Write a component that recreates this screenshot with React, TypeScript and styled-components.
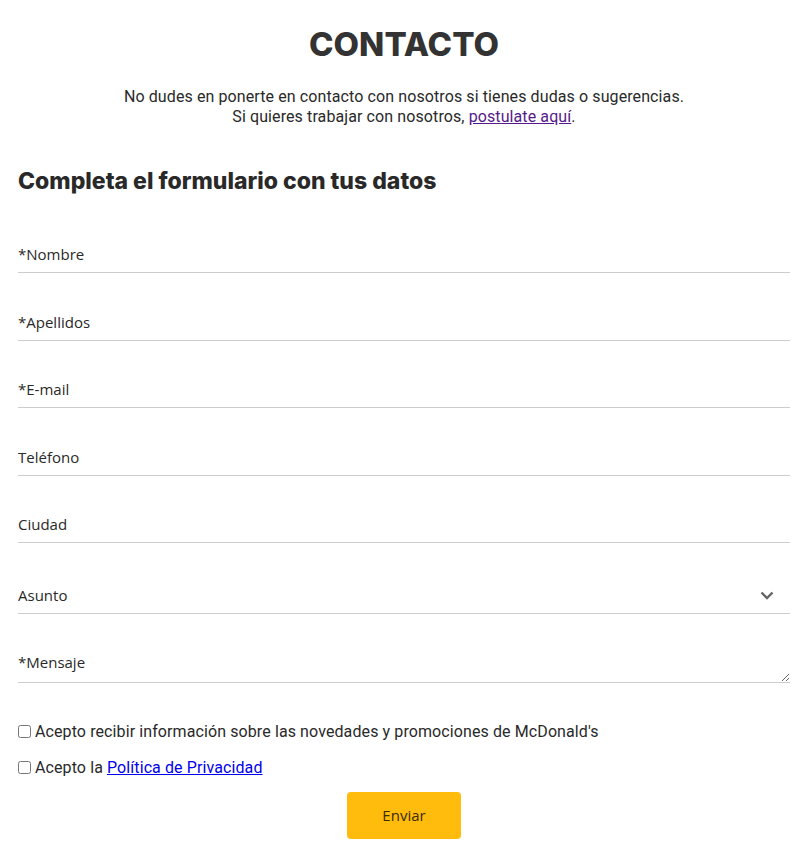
import styled, { createGlobalStyle } from 'styled-components';

const GlobalStyle = createGlobalStyle`
  body {
    margin: 0;
    background: #ffffff;
    color: #292929;
    font-family: Roboto, 'Liberation Sans', sans-serif;
  }
  * {
    box-sizing: border-box;
  }
`;

const fields = [
  { name: 'nombre', label: '*Nombre' },
  { name: 'apellidos', label: '*Apellidos' },
  { name: 'email', label: '*E-mail' },
  { name: 'telefono', label: 'Teléfono' },
  { name: 'ciudad', label: 'Ciudad' },
];

const App = () => {
  return (
    <>
      <GlobalStyle />
      <Page>
        <Title>CONTACTO</Title>
        <Intro>
          No dudes en ponerte en contacto con nosotros si tienes dudas o sugerencias.
          <br />
          Si quieres trabajar con nosotros, <VisitedLink href="#">postulate aquí</VisitedLink>.
        </Intro>
        <FormTitle>Completa el formulario con tus datos</FormTitle>
        <Form onSubmit={(e) => e.preventDefault()}>
          {fields.map((f) => (
            <TextInput key={f.name} name={f.name} placeholder={f.label} />
          ))}
          <SelectWrap>
            <Select defaultValue="">
              <option value="" disabled>
                Asunto
              </option>
              <option value="1">Consulta</option>
            </Select>
            <Chevron viewBox="0 0 14 9" aria-hidden>
              <path d="M1.5 1.5 L7 7 L12.5 1.5" />
            </Chevron>
          </SelectWrap>
          <TextArea placeholder="*Mensaje" />
          <Checks>
            <CheckRow>
              <input type="checkbox" />
              Acepto recibir información sobre las novedades y promociones de McDonald's
            </CheckRow>
            <CheckRow>
              <input type="checkbox" />
              Acepto la <BlueLink href="#">Política de Privacidad</BlueLink>
            </CheckRow>
          </Checks>
          <SubmitButton type="submit">Enviar</SubmitButton>
        </Form>
      </Page>
    </>
  );
};
export default App;

const Page = styled.main`
  padding: 22px 15px 6px 18px;
`;

const Title = styled.h1`
  margin: 0;
  text-align: center;
  font-family: Inter, 'Liberation Sans', sans-serif;
  font-weight: 800;
  font-size: 33px;
  line-height: 44px;
  color: #333333;
`;

const Intro = styled.p`
  margin: 21px 0 0;
  text-align: center;
  font-size: 16px;
  line-height: 20px;
  letter-spacing: 0.1px;
  color: #292929;
`;

const VisitedLink = styled.a`
  color: #551a8b;
`;

const BlueLink = styled.a`
  color: #0000ee;
  margin-left: 4px;
`;

const FormTitle = styled.h2`
  margin: 39px 0 0;
  font-family: Inter, 'Liberation Sans', sans-serif;
  font-weight: 800;
  font-size: 23px;
  line-height: 30px;
  color: #292929;
`;

const Form = styled.form`
  display: flex;
  flex-direction: column;
  margin-top: 37px;
`;

const inputBase = `
  width: 100%;
  border: none;
  border-bottom: 1px solid #cccccc;
  outline: none;
  background: transparent;
  font-family: 'Open Sans', 'Noto Sans', sans-serif;
  font-size: 15px;
  color: #292929;
  padding: 0;
  &::placeholder {
    color: #292929;
    opacity: 1;
  }
`;

const TextInput = styled.input`
  ${inputBase}
  height: 40px;
  padding-top: 3px;
  margin-bottom: 27.5px;
`;

const SelectWrap = styled.div`
  position: relative;
  margin-bottom: 27px;
`;

const Select = styled.select`
  ${inputBase}
  appearance: none;
  height: 43px;
  padding-top: 6px;
`;

const Chevron = styled.svg`
  position: absolute;
  right: 16px;
  top: 20px;
  width: 14px;
  height: 9px;
  fill: none;
  stroke: #666666;
  stroke-width: 2.4;
  pointer-events: none;
`;

const TextArea = styled.textarea`
  ${inputBase}
  height: 42px;
  padding-top: 11px;
  resize: vertical;
  display: block;
`;

const Checks = styled.div`
  display: flex;
  flex-direction: column;
  gap: 16px;
  margin-top: 39px;
`;

const CheckRow = styled.label`
  display: flex;
  align-items: center;
  font-size: 16px;
  line-height: 20px;
  letter-spacing: 0.1px;
  color: #292929;
  input {
    margin: 0 4px 0 0;
    width: 13px;
    height: 13px;
  }
`;

const SubmitButton = styled.button`
  align-self: center;
  margin-top: 14px;
  width: 114px;
  height: 47px;
  border: none;
  border-radius: 4px;
  background: #ffbc0d;
  font-family: 'Open Sans', 'Noto Sans', sans-serif;
  font-size: 15px;
  color: #3b2a00;
  cursor: pointer;
`;
